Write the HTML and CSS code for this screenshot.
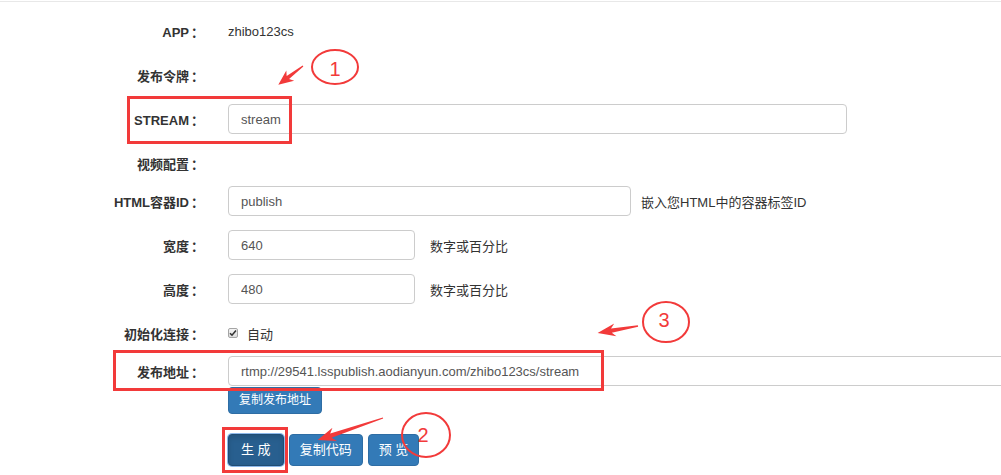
FILE: index.html
```html
<!DOCTYPE html>
<html lang="zh-CN">
  <head>
    <meta charset="UTF-8" />
    <meta name="viewport" content="width=device-width, initial-scale=1.0" />
    <title>发布设置</title>
    <link rel="stylesheet" href="styles.css">
  </head>
  <body>
    <div class="topline"></div>

    <form class="publish-form">
      <div class="row">
        <label class="label">APP<span class="colon">：</span></label>
        <div class="field"><span class="value">zhibo123cs</span></div>
      </div>

      <div class="row">
        <label class="label">发布令牌<span class="colon">：</span></label>
      </div>

      <div class="row">
        <label class="label" for="stream">STREAM<span class="colon">：</span></label>
        <div class="field">
          <input class="input w-stream" id="stream" type="text" value="stream" />
        </div>
      </div>

      <div class="row tight">
        <label class="label">视频配置<span class="colon">：</span></label>
      </div>

      <div class="row">
        <label class="label" for="container">HTML容器ID<span class="colon">：</span></label>
        <div class="field">
          <input class="input w-mid" id="container" type="text" value="publish" />
          <span class="help">嵌入您HTML中的容器标签ID</span>
        </div>
      </div>

      <div class="row">
        <label class="label" for="width">宽度<span class="colon">：</span></label>
        <div class="field">
          <input class="input w-small" id="width" type="text" value="640" />
          <span class="help wide">数字或百分比</span>
        </div>
      </div>

      <div class="row">
        <label class="label" for="height">高度<span class="colon">：</span></label>
        <div class="field">
          <input class="input w-small" id="height" type="text" value="480" />
          <span class="help wide">数字或百分比</span>
        </div>
      </div>

      <div class="row tight">
        <label class="label">初始化连接<span class="colon">：</span></label>
        <div class="field">
          <span class="check">
            <svg width="8" height="8" viewBox="0 0 8 8">
              <path d="M1 4.2 L3 6.2 L7 1.6" fill="none" stroke="#333" stroke-width="1.6" />
            </svg>
          </span>
          <span class="check-text">自动</span>
        </div>
      </div>

      <div class="row flush">
        <label class="label" for="url">发布地址<span class="colon">：</span></label>
        <div class="field">
          <input class="input w-url" id="url" type="text" value="rtmp://29541.lsspublish.aodianyun.com/zhibo123cs/stream" />
        </div>
      </div>

      <div class="row-btn">
        <button type="button" class="btn btn-sm">复制发布地址</button>
      </div>

      <div class="row-actions">
        <button type="button" class="btn active">生 成</button>
        <button type="button" class="btn">复制代码</button>
        <button type="button" class="btn">预 览</button>
      </div>
    </form>

    <!-- red annotations drawn over the form -->
    <svg class="marks" width="1001" height="475" viewBox="0 0 1001 475">
      <g fill="none" stroke="#f23a3a" stroke-width="3">
        <rect x="128.5" y="97.5" width="162" height="45" />
        <rect x="114.5" y="351.5" width="488" height="38" />
        <rect x="223.5" y="428.5" width="63" height="43" />
      </g>
      <g fill="none" stroke="#f23a3a" stroke-width="2">
        <ellipse cx="335" cy="67" rx="23" ry="17" />
        <ellipse cx="426" cy="435" rx="24" ry="22" />
        <ellipse cx="666" cy="322" rx="23" ry="20" />
      </g>
      <g fill="#f23a3a" font-family="'Liberation Sans', Arial, sans-serif" font-size="20" text-anchor="middle">
        <text x="335" y="76">1</text>
        <text x="423" y="442">2</text>
        <text x="664" y="327">3</text>
      </g>
      <g fill="#f23a3a">
        <path transform="translate(303 66) rotate(142.8)" d="M0,-0.6 L19,-2 L16,-6.5 L31,0 L16,6.5 L19,2 L0,0.6 Z" />
        <path transform="translate(383 418) rotate(161.3)" d="M0,-0.6 L55,-2.2 L51,-7 L69,0 L51,7 L55,2.2 L0,0.6 Z" />
        <path transform="translate(638 326) rotate(170.1)" d="M0,-0.8 L27,-2.2 L23,-6.5 L41,0 L23,6.5 L27,2.2 L0,0.8 Z" />
      </g>
    </svg>
  </body>
</html>
```

FILE: styles.css
```css
html,
body {
  margin: 0;
  padding: 0;
}

body {
  position: relative;
  width: 1001px;
  height: 475px;
  overflow: hidden;
  background-color: #fff;
  color: #333;
  font-family: "Liberation Sans", Arial, "Noto Sans CJK SC", sans-serif;
  font-size: 13px;
}

.topline {
  height: 1px;
  margin-top: 1px;
  background-color: #e8e8e8;
}

.publish-form {
  padding-top: 14px;
}

.row {
  display: flex;
  align-items: center;
  height: 30px;
  margin-bottom: 14px;
}

.row.tight {
  margin-bottom: 8px;
}

.row.flush {
  margin-bottom: 1px;
}

.label {
  width: 204px;
  flex: none;
  text-align: right;
  font-weight: bold;
  color: #333;
  white-space: nowrap;
}

.colon {
  margin-left: 2px;
}

.field {
  display: flex;
  align-items: center;
  margin-left: 24px;
  white-space: nowrap;
}

.value {
  color: #333;
}

.input {
  box-sizing: border-box;
  height: 30px;
  padding: 0 12px;
  border: 1px solid #ccc;
  border-radius: 4px;
  background-color: #fff;
  color: #555;
  font-family: "Liberation Sans", Arial, "Noto Sans CJK SC", sans-serif;
  font-size: 13px;
  outline: none;
}

.w-stream {
  width: 619px;
}

.w-mid {
  width: 403px;
}

.w-small {
  width: 187px;
}

.w-url {
  width: 820px;
}

.help {
  margin-left: 10px;
  color: #333;
}

.help.wide {
  margin-left: 15px;
}

.check {
  display: inline-flex;
  align-items: center;
  justify-content: center;
  box-sizing: border-box;
  width: 10px;
  height: 10px;
  border: 1px solid #a5a5a5;
  border-radius: 2px;
  background: linear-gradient(#f4f4f4, #dcdcdc);
}

.check-text {
  margin-left: 9px;
}

.row-btn {
  padding-left: 228px;
  margin-bottom: 20px;
  height: 27px;
}

.row-actions {
  display: flex;
  gap: 5px;
  padding-left: 228px;
}

.btn {
  box-sizing: border-box;
  height: 32px;
  padding: 0 10px;
  border: 1px solid #2e6da4;
  border-radius: 4px;
  background-color: #337ab7;
  color: #fff;
  font-family: "Liberation Sans", Arial, "Noto Sans CJK SC", sans-serif;
  font-size: 13px;
  line-height: 20px;
  cursor: pointer;
}

.btn-sm {
  height: 27px;
  font-size: 12px;
  line-height: 17px;
}

.btn.active {
  padding: 0 12px;
  background-color: #285f8f;
  border-color: #204d74;
  box-shadow: 0 0 0 1px #8db8ea, inset 0 3px 5px rgba(0, 0, 0, 0.125);
}

.marks {
  position: absolute;
  left: 0;
  top: 0;
  pointer-events: none;
}
```
